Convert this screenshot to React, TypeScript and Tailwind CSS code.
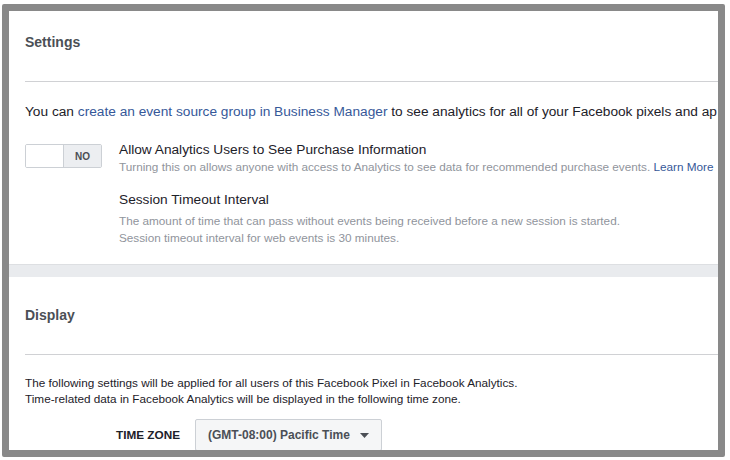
import React from "react";

const Section = ({ title, top, children }: { title: string; top: string; children: React.ReactNode }) => (
  <div className="pl-4">
    <div className={`${top} pb-[30px] border-b border-[#d0d1d4]`}>
      <h2 className="text-[14px] leading-[18px] font-bold text-[#4b4f56]">{title}</h2>
    </div>
    {children}
  </div>
);

const App = () => {
  return (
    <div className="w-[730px] h-[460px] bg-white pt-[4px] pl-[2px]" style={{ fontFamily: '"Liberation Sans", Arial, sans-serif' }}>
      <div className="w-[723px] h-[453px] border-[7px] border-[#898989] rounded-[2px] overflow-hidden bg-white">
        <div className="w-[709px]">
          <Section title="Settings" top="pt-[22px]">
            <p className="mt-[21px] text-[13.7px] leading-[18px] text-[#1d2129] whitespace-nowrap overflow-hidden">
              You can <span className="text-[#365899]">create an event source group in Business Manager</span> to see analytics for all of your Facebook pixels and ap
            </p>

            <div className="flex gap-[17px] mt-[20px] pb-[18px]">
              <div className="pt-[3px]">
                <div className="flex w-[77px] h-[24px] border border-[#ccd0d5] rounded-[2px] overflow-hidden">
                  <div className="w-[38px] bg-white border-r border-[#ccd0d5]" />
                  <div className="flex-1 bg-[#eceef1] flex items-center justify-center text-[10px] font-bold text-[#4b4f56]">
                    NO
                  </div>
                </div>
              </div>
              <div>
                <div className="text-[13.7px] leading-[18px] text-[#1d2129]">Allow Analytics Users to See Purchase Information</div>
                <div className="text-[11.75px] leading-[16px] text-[#90949c] whitespace-nowrap">
                  Turning this on allows anyone with access to Analytics to see data for recommended purchase events.{" "}
                  <span className="text-[#365899]">Learn More</span>
                </div>

                <div className="mt-[16px] text-[13.7px] leading-[18px] text-[#1d2129]">Session Timeout Interval</div>
                <div className="mt-[3px] text-[11.75px] leading-[17px] text-[#90949c]">
                  <div>The amount of time that can pass without events being received before a new session is started.</div>
                  <div>Session timeout interval for web events is 30 minutes.</div>
                </div>
              </div>
            </div>
          </Section>

          <div className="h-[13px] bg-[#e9ebee] border-t border-[#dddfe2]" />

          <Section title="Display" top="pt-[29px]">
            <div className="mt-[20px] text-[11.75px] leading-[16px] text-[#1d2129]">
              <div>The following settings will be applied for all users of this Facebook Pixel in Facebook Analytics.</div>
              <div>Time-related data in Facebook Analytics will be displayed in the following time zone.</div>
            </div>

            <div className="flex items-center mt-[12px]">
              <div className="w-[170px] text-right pr-[15px] text-[11.75px] font-bold text-[#1d2129]">TIME ZONE</div>
              <div className="w-[187px] h-[32px] flex items-center justify-between pl-[12px] pr-[12px] bg-[#f5f6f7] border border-[#ccd0d5] rounded-[2px]">
                <span className="text-[12px] font-bold text-[#4b4f56]">(GMT-08:00) Pacific Time</span>
                <svg width="9" height="5" viewBox="0 0 9 5" className="text-[#4b4f56]">
                  <path d="M0 0h9L4.5 5z" fill="currentColor" />
                </svg>
              </div>
            </div>
          </Section>
        </div>
      </div>
    </div>
  );
};

export default App;
